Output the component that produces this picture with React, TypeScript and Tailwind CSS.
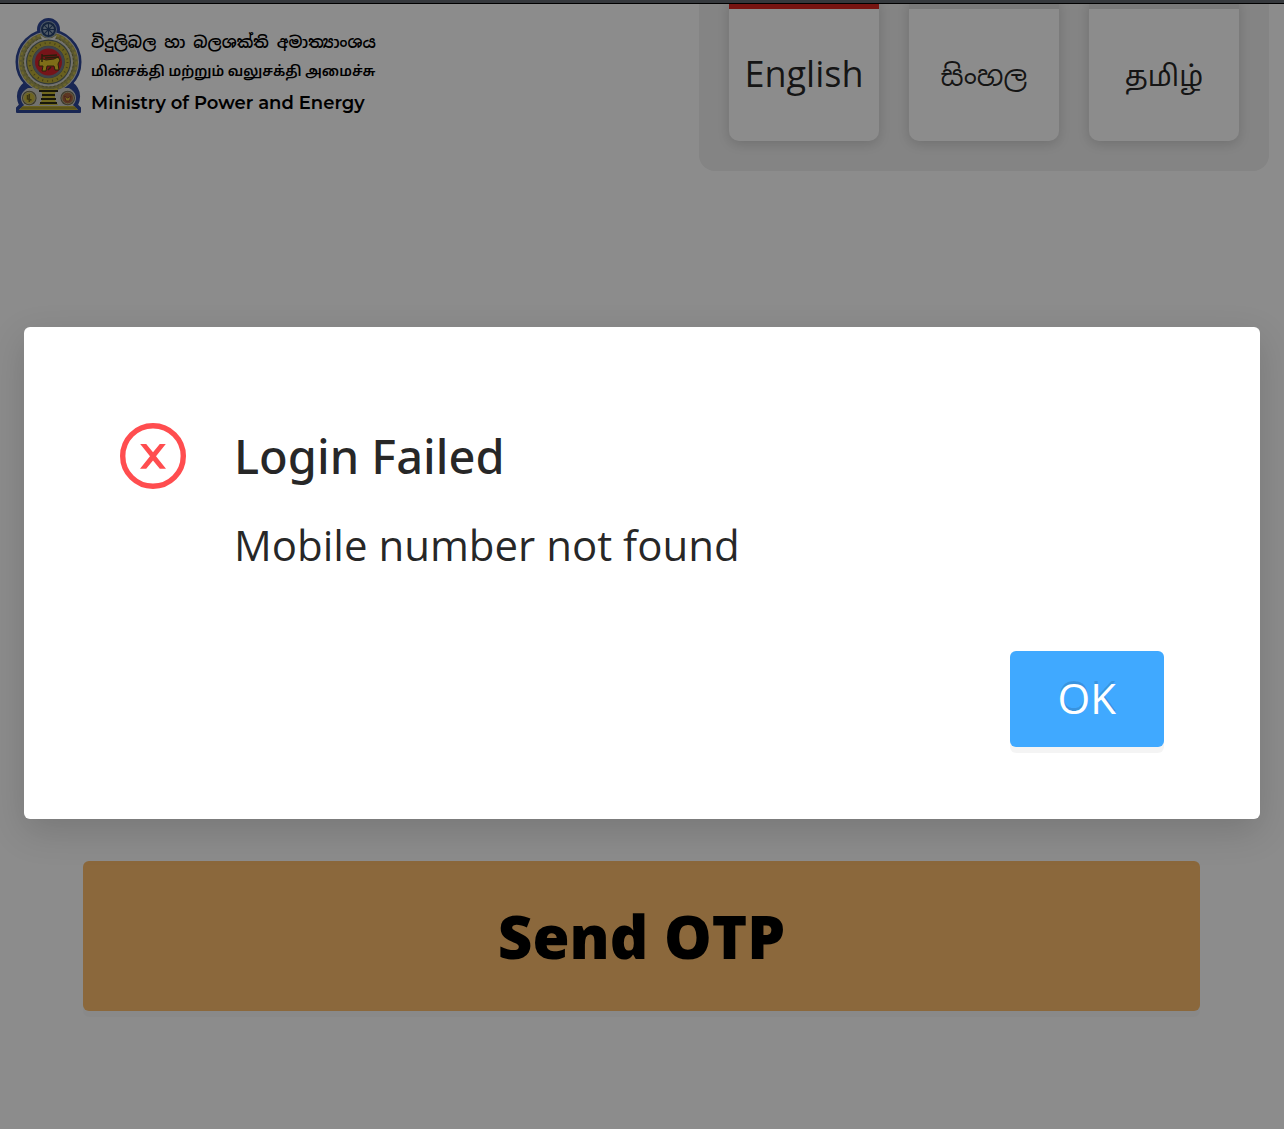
import React from "react";

const languages = [
  { label: "English", lang: "en", active: true },
  { label: "සිංහල", lang: "si", active: false },
  { label: "தமிழ்", lang: "ta", active: false },
];

const spokes = [0, 45, 90, 135];

function Emblem() {
  return (
    <svg viewBox="0 0 68 96" className="h-24 w-17 shrink-0" role="img" aria-label="National emblem">
      <g fill="#2f4798" stroke="#2f4798" strokeWidth="2" strokeLinejoin="round">
        <circle cx="33.5" cy="11.5" r="10.5" />
        <circle cx="33.5" cy="44" r="32" />
        <path d="M11 64 C3 70 1 78 5 87 L2 90 V94 H65 V90 L62 87 C66 78 64 70 56 64 Z" />
      </g>
      <g fill="#d0d0cb">
        <circle cx="33.5" cy="44" r="30.5" />
        <path d="M13 70 C5 74 4 82 9 87 L4 92 H63 L58 87 C63 82 62 74 54 70 Z" />
      </g>
      <circle cx="33.5" cy="44" r="27" fill="none" stroke="#a19c58" strokeWidth="5" />
      <circle cx="33.5" cy="44" r="28" fill="none" stroke="#c4b84c" strokeWidth="2" strokeDasharray="3 2" />
      <circle cx="33.5" cy="44" r="25" fill="none" stroke="#77773f" strokeWidth="1" strokeDasharray="2 2" />
      <path d="M25 17 L33.5 22 L42 17 L39 23 H28 Z" fill="#e6e6e2" />
      <circle cx="33.5" cy="44" r="22.5" fill="#5d6a68" />
      <circle cx="33.5" cy="44" r="18.8" fill="none" stroke="#c0b03a" strokeWidth="5" />
      <circle cx="33.5" cy="44" r="19" fill="none" stroke="#7a7028" strokeWidth="2" strokeDasharray="1 4" />
      <circle cx="33.5" cy="44" r="16" fill="#737b88" />
      <circle cx="33.5" cy="44" r="13.5" fill="#d8262f" />
      <path
        d="M24 43 C25 40 28 41 31 42 L39 41 L43 39 L45 42 L43 46 L44 52 L40 52 L39 48 L32 48 L31 53 L27 53 L28 48 L24 48 Z"
        fill="#e6c62c"
        stroke="#4a3a14"
        strokeWidth="1"
      />
      <path d="M27 38 L42 37 M27 36 V44 M30 40 L44 39 M33 52 L36 49" fill="none" stroke="#4a3a14" strokeWidth="1.5" />
      <circle cx="33.5" cy="11.5" r="8.5" fill="#8ea2b8" />
      <circle cx="33.5" cy="11.5" r="6.5" fill="none" stroke="#27436f" strokeWidth="2" />
      <g stroke="#27436f" strokeWidth="1">
        {spokes.map((angle) => (
          <path key={angle} d="M33.5 4 V19" transform={`rotate(${angle} 33.5 11.5)`} />
        ))}
      </g>
      <circle cx="33.5" cy="11.5" r="2" fill="#27436f" />
      <path d="M24 71 H43 L40 75 V82 L43 87 H24 L27 82 V75 Z" fill="#cdbd3a" />
      <path d="M24 73 H43 M27 77 H40 M26 81 H41 M25 85 H42" stroke="#2c2a16" strokeWidth="2" />
      <circle cx="14.3" cy="80" r="7.3" fill="#6f6a45" />
      <circle cx="14.3" cy="80" r="5.8" fill="#c9b83e" stroke="#c2ba88" strokeWidth="1" />
      <path d="M14.3 76 V84 M12.5 77 V81 L16.5 82" fill="none" stroke="#6a5f22" strokeWidth="1.5" />
      <circle cx="52.7" cy="80" r="7.3" fill="#6f6a55" />
      <circle cx="52.7" cy="80" r="5.8" fill="#a8643f" stroke="#b5a980" strokeWidth="1" />
      <path d="M49.5 78 L52.7 80 L56 78 L54.5 83 H51 Z" fill="#d9bd38" stroke="#8a4238" strokeWidth="1" />
      <path d="M8 88 H59 L63 92 H4 Z" fill="#bfb03a" />
      <path d="M6 90 H61" stroke="#8f842f" strokeWidth="1" />
    </svg>
  );
}

function ErrorIcon() {
  return (
    <svg viewBox="0 0 66 66" className="size-[66px] shrink-0" aria-hidden="true">
      <circle cx="33" cy="33" r="30.3" fill="none" stroke="#ff4d4f" strokeWidth="5.4" />
      <path
        d="M20.2 21 H26.2 L33 29.2 L39.8 21 H45.8 L36 33.2 L46 45.8 H39.8 L33 37.4 L26.2 45.8 H20 L30 33.2 Z"
        fill="#ff4d4f"
      />
    </svg>
  );
}

export default function App() {
  return (
    <div className="relative min-h-screen bg-white font-['Open_Sans','Noto_Sans',sans-serif] text-black/85">
      <header className="flex items-start justify-between px-[15px]">
        <div className="flex items-start gap-2 pt-[18px]">
          <Emblem />
          <div className="flex flex-col pt-2.5 whitespace-nowrap text-black">
            <span
              lang="si"
              className="font-['Noto_Sans_Sinhala','Open_Sans',sans-serif] text-[16px] leading-[30px] font-semibold"
            >
              විදුලිබල හා බලශක්ති අමාත්‍යාංශය
            </span>
            <span
              lang="ta"
              className="font-['Noto_Sans_Tamil','Open_Sans',sans-serif] text-[14px] leading-[30px] font-semibold"
            >
              மின்சக்தி மற்றும் வலுசக்தி அமைச்சு
            </span>
            <span className="font-['Montserrat','Open_Sans',sans-serif] text-[18px] leading-[30px] font-semibold">
              Ministry of Power and Energy
            </span>
          </div>
        </div>
        <nav aria-label="Language" className="flex gap-[30px] rounded-b-2xl bg-[#f0f0f0] px-[30px] pb-[30px]">
          {languages.map(({ label, lang, active }) => (
            <button
              key={lang}
              lang={lang}
              type="button"
              aria-pressed={active}
              className={`h-[141px] w-[150px] rounded-b-[10px] border-t-[9px] bg-white font-['Open_Sans','Noto_Sans_Sinhala','Noto_Sans_Tamil',sans-serif] shadow-[0_3px_12px_rgba(0,0,0,0.15)] ${
                active ? "border-[#d9251f] pb-0.5 text-[36px]" : "border-[#dcdcdc] text-[28px]"
              }`}
            >
              {label}
            </button>
          ))}
        </nav>
      </header>

      <main className="pt-[690px] pr-[84px] pb-[118px] pl-[83px]">
        <button
          type="button"
          className="h-[150px] w-full rounded-md bg-[#fdbe6d] text-[60px] font-extrabold text-black shadow-[0_6px_0_rgba(0,0,0,0.02)]"
        >
          Send OTP
        </button>
      </main>

      <div className="absolute inset-0 bg-black/45 px-6 pt-[327px]">
        <div
          role="alertdialog"
          aria-modal="true"
          aria-labelledby="dialog-title"
          aria-describedby="dialog-text"
          className="rounded-md bg-white px-24 pt-24 pb-[72px] shadow-[0_12px_36px_rgba(0,0,0,0.15)]"
        >
          <div className="flex items-start gap-12">
            <ErrorIcon />
            <div>
              <h1 id="dialog-title" className="font-['Noto_Sans',sans-serif] text-[47px] leading-[66px] font-medium">
                Login Failed
              </h1>
              <p id="dialog-text" className="mt-6 text-[42px] leading-[64px]">
                Mobile number not found
              </p>
            </div>
          </div>
          <div className="mt-[74px] flex justify-end">
            <button
              type="button"
              className="h-24 rounded-md bg-[#40a9ff] px-12 pb-1 text-[42px] text-white shadow-[0_6px_0_rgba(0,0,0,0.045)] text-shadow-[0_-3px_0_rgba(0,0,0,0.12)]"
            >
              OK
            </button>
          </div>
        </div>
      </div>
      <div className="absolute inset-x-0 top-0 h-1 border-b border-black bg-[#36393d]" />
    </div>
  );
}
